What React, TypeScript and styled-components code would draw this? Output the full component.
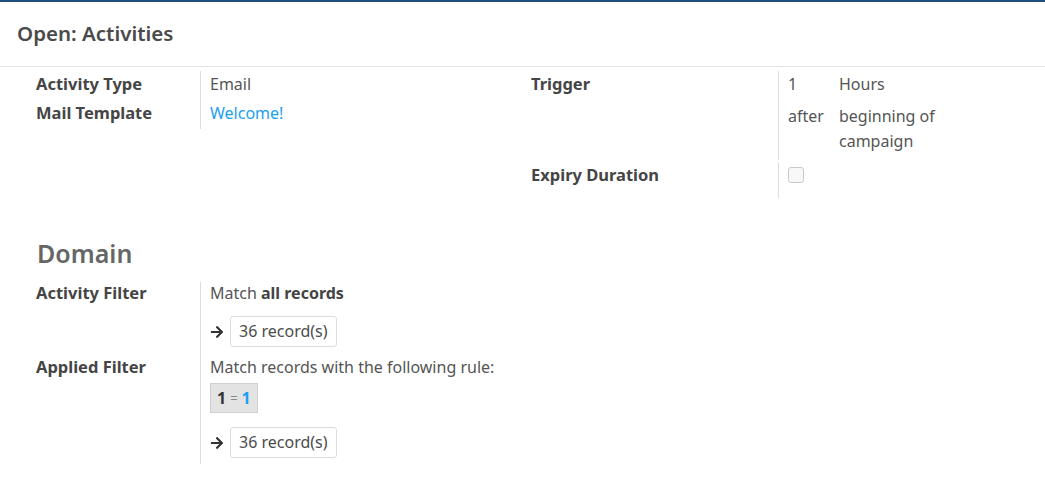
import React from "react";
import styled, { createGlobalStyle } from "styled-components";
import { FaArrowRight } from "react-icons/fa";

const GlobalStyle = createGlobalStyle`
  html, body { margin: 0; padding: 0; background: #ffffff; }
  body { font-family: "Noto Sans", "Open Sans", sans-serif; color: #4c4c4c; }
  * { box-sizing: border-box; }
`;

const Page = styled.div`
  width: 1045px;
  min-height: 502px;
  background: #fff;
`;

const TopStrip = styled.div`
  height: 2px;
  background: #1f4f7a;
`;

const Header = styled.header`
  height: 65px;
  display: flex;
  align-items: center;
  padding: 0 17px 2px;
  border-bottom: 1px solid #e4e4e4;
`;

const Title = styled.h1`
  margin: 0;
  font-size: 20.5px;
  font-weight: 600;
  color: #4a4a4a;
`;

const Sheet = styled.div`
  padding: 4px 0 0 36px;
`;

const GroupsRow = styled.div`
  display: grid;
  grid-template-columns: 495px 1fr;
  align-items: start;
`;

const Group = styled.div<{ $label: number; $gap?: number }>`
  display: grid;
  grid-template-columns: ${(p) => p.$label}px 1fr;
  row-gap: ${(p) => p.$gap ?? 0}px;
`;

const Label = styled.div<{ $lh?: number }>`
  font-size: 16.5px;
  font-weight: 700;
  color: #454545;
  line-height: ${(p) => p.$lh ?? 26}px;
`;

const Value = styled.div<{ $lh?: number; $pb?: number }>`
  border-left: 1px solid #dcdcdc;
  padding: 0 0 ${(p) => p.$pb ?? 3}px 9px;
  font-size: 16px;
  color: #555;
  line-height: ${(p) => p.$lh ?? 26}px;
`;

const Link = styled.a`
  color: #1aa0f0;
  text-decoration: none;
`;

const TriggerGrid = styled.div`
  display: grid;
  grid-template-columns: 51px 104px;
  row-gap: 7px;
  line-height: 25px;
  padding-top: 1px;
`;

const Checkbox = styled.span`
  display: inline-block;
  width: 16px;
  height: 16px;
  margin-top: 4px;
  border: 1px solid #c9c9c9;
  border-radius: 3px;
  background: #f8f8f8;
  vertical-align: top;
`;

const SectionTitle = styled.h2`
  margin: 40px 0 14px 1px;
  font-size: 25px;
  font-weight: 600;
  line-height: 30px;
  color: #666;
`;

const Line = styled.div`
  line-height: 22px;
`;

const Strong = styled.b`
  color: #444;
  font-weight: 700;
`;

const RecordsRow = styled.div<{ $mt: number }>`
  display: flex;
  align-items: center;
  gap: 6px;
  margin-top: ${(p) => p.$mt}px;
  color: #333;
`;

const RecordsButton = styled.button`
  height: 31px;
  padding: 0 8px;
  border: 1px solid #dcdcdc;
  border-radius: 3px;
  background: #fff;
  font-family: "Noto Sans", "Open Sans", sans-serif;
  font-size: 16px;
  line-height: 29px;
  color: #4c4c4c;
`;

const RuleBox = styled.div`
  display: inline-flex;
  align-items: center;
  gap: 4px;
  height: 30px;
  margin-top: 5px;
  padding: 0 6px;
  background: #e3e3e3;
  border: 1px solid #cfcfcf;
  font-size: 16px;
`;

const RuleLeft = styled.b`
  color: #333;
`;
const RuleOp = styled.span`
  font-size: 13px;
  color: #888;
`;
const RuleRight = styled.b`
  color: #1aa0f0;
`;

function Records({ mt }: { mt: number }) {
  return (
    <RecordsRow $mt={mt}>
      <FaArrowRight size={14} />
      <RecordsButton>36 record(s)</RecordsButton>
    </RecordsRow>
  );
}

export default function App() {
  return (
    <Page>
      <GlobalStyle />
      <TopStrip />
      <Header>
        <Title>Open: Activities</Title>
      </Header>
      <Sheet>
        <GroupsRow>
          <Group $label={164}>
            <Label>Activity Type</Label>
            <Value>Email</Value>
            <Label>Mail Template</Label>
            <Value>
              <Link href="#">Welcome!</Link>
            </Value>
          </Group>
          <Group $label={247} $gap={3}>
            <Label>Trigger</Label>
            <Value $lh={25} $pb={6}>
              <TriggerGrid>
                <span>1</span>
                <span>Hours</span>
                <span>after</span>
                <span>beginning of campaign</span>
              </TriggerGrid>
            </Value>
            <Label $lh={24}>Expiry Duration</Label>
            <Value $lh={24} $pb={11}>
              <Checkbox />
            </Value>
          </Group>
        </GroupsRow>
        <SectionTitle>Domain</SectionTitle>
        <Group $label={164}>
          <Label $lh={22}>Activity Filter</Label>
          <Value $lh={22} $pb={9}>
            <Line>
              Match <Strong>all records</Strong>
            </Line>
            <Records mt={12} />
          </Value>
          <Label $lh={22}>Applied Filter</Label>
          <Value $lh={22} $pb={6}>
            <Line>Match records with the following rule:</Line>
            <RuleBox>
              <RuleLeft>1</RuleLeft>
              <RuleOp>=</RuleOp>
              <RuleRight>1</RuleRight>
            </RuleBox>
            <Records mt={14} />
          </Value>
        </Group>
      </Sheet>
    </Page>
  );
}
